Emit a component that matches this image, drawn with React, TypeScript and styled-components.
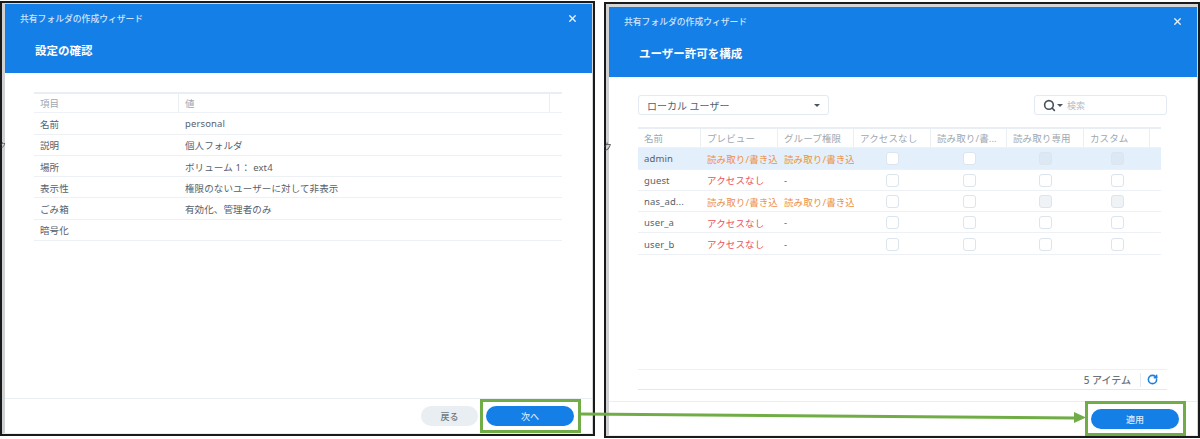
import React from "react";
import styled, { createGlobalStyle } from "styled-components";
import { X, Search, RotateCw } from "lucide-react";

const Global = createGlobalStyle`
  html, body { margin: 0; padding: 0; background: #fff; }
  body { font-family: "Noto Sans", "Noto Sans CJK JP", sans-serif; font-size: 9.5px; letter-spacing: 0.12px; color: #56616c; }
  #root { width: 1200px; height: 439px; overflow: hidden; }
`;

const Page = styled.div`
  position: relative;
  width: 1200px;
  height: 439px;
  display: flex;
  align-items: flex-start;
  gap: 9px;
  padding-top: 1px;
  box-sizing: border-box;
  filter: blur(0.35px);
`;

const Frame = styled.section<{ $w: number; $h: number; $top: number }>`
  width: ${(p) => p.$w}px;
  height: ${(p) => p.$h}px;
  margin-top: ${(p) => p.$top}px;
  flex: none;
  box-sizing: border-box;
  border: 2px solid #1a1a1a;
  background: #fff;
`;

const Dialog = styled.div<{ $inset: number }>`
  height: 100%;
  box-sizing: border-box;
  display: flex;
  flex-direction: column;
  border-left: 3px solid #cfd1d3;
  border-top: ${(p) => p.$inset}px solid #d4d6d8;
  border-right: 1px solid #d4d6d8;
  border-bottom: 1px solid #eceef0;
`;

const Header = styled.header<{ $h: number }>`
  height: ${(p) => p.$h}px;
  flex: none;
  background: #157fe8;
  box-sizing: border-box;
  padding: 7px 15px 0 15px;
  color: #fff;
`;

const HeaderTop = styled.div`
  display: flex;
  align-items: center;
  justify-content: space-between;
  height: 14px;
`;

const WizardName = styled.div`
  font-size: 8.8px;
  font-weight: 500;
  letter-spacing: 0;
  color: #cfe4fa;
  white-space: nowrap;
`;

const CloseIcon = styled(X)`
  width: 11px;
  height: 11px;
  color: #e4f0fc;
  margin-right: -1px;
`;

const Title = styled.h2`
  margin: 18px 0 0 15px;
  font-size: 11.5px;
  line-height: 16px;
  font-weight: 700;
  letter-spacing: 0;
  color: #fff;
  white-space: nowrap;
`;

const Body = styled.div<{ $top: number; $bottom: number }>`
  flex: 1;
  min-height: 0;
  display: flex;
  flex-direction: column;
  padding: ${(p) => p.$top}px 30px ${(p) => p.$bottom}px 29px;
`;

const Footer = styled.footer<{ $h: number }>`
  height: ${(p) => p.$h}px;
  flex: none;
  box-sizing: border-box;
  border-top: 1px solid #e9eef3;
  padding: 7px 18px 0 0;
  display: flex;
  justify-content: flex-end;
  gap: 8px;
`;

const Button = styled.button<{ $primary?: boolean; $w: number }>`
  width: ${(p) => p.$w}px;
  height: 20px;
  border: none;
  border-radius: 10px;
  padding: 0;
  font-family: inherit;
  font-size: 9px;
  font-weight: 500;
  background: ${(p) => (p.$primary ? "#157fe8" : "#e9eef3")};
  color: ${(p) => (p.$primary ? "#d8e9fb" : "#6d7882")};
`;

const PermTable = styled.div`
  width: 523px;
`;

const Row = styled.div<{ $cols: string; $selected?: boolean; $head?: boolean }>`
  display: grid;
  grid-template-columns: ${(p) => p.$cols};
  height: 21.3px;
  box-sizing: border-box;
  align-items: stretch;
  padding-top: ${(p) => (p.$head ? 0 : 1)}px;
  border-bottom: 1px solid ${(p) => (p.$head ? "#eef2f6" : "#edf1f5")};
  border-top: ${(p) => (p.$head ? "2px solid #e8eef4" : "none")};
  background: ${(p) => (p.$selected ? "#e3effa" : "transparent")};
  color: ${(p) => (p.$head ? "#a0a8b0" : "#56616c")};
`;

const Cell = styled.div<{ $divider?: boolean; $center?: boolean; $tone?: "orange" | "red" }>`
  display: flex;
  align-items: center;
  justify-content: ${(p) => (p.$center ? "center" : "flex-start")};
  padding: ${(p) => (p.$center ? "0" : "0 0 0 6px")};
  white-space: nowrap;
  overflow: hidden;
  border-right: ${(p) => (p.$divider ? "1px solid #eaeff4" : "none")};
  color: ${(p) => (p.$tone === "orange" ? "#ee8f45" : p.$tone === "red" ? "#ee4f5a" : "inherit")};
`;

const Check = styled.span<{ $fill?: string }>`
  width: 13px;
  height: 13px;
  box-sizing: border-box;
  border-radius: 3px;
  border: 1px solid #dce5ee;
  background: ${(p) => p.$fill ?? "#fff"};
`;

const Toolbar = styled.div`
  display: flex;
  justify-content: space-between;
  height: 20px;
  margin-bottom: 12px;
`;

const Field = styled.div<{ $w: number }>`
  width: ${(p) => p.$w}px;
  box-sizing: border-box;
  border: 1px solid #e3eaf1;
  border-radius: 3px;
  display: flex;
  align-items: center;
  padding: 0 8px;
  white-space: nowrap;
`;

const SelectValue = styled.span`
  font-size: 10px;
  letter-spacing: 0;
`;

const Caret = styled.span`
  width: 0;
  height: 0;
  border-left: 3px solid transparent;
  border-right: 3px solid transparent;
  border-top: 3px solid #4a5560;
`;

const SelectCaret = styled(Caret)`
  margin-left: auto;
  border-left-width: 3.5px;
  border-right-width: 3.5px;
`;

const SearchIcon = styled(Search)`
  width: 13px;
  height: 13px;
  color: #46525e;
  stroke-width: 3;
  margin-right: 1px;
`;

const Placeholder = styled.span`
  margin-left: 4px;
  color: #b4bbc2;
  font-size: 9px;
`;

const StatusBar = styled.div`
  margin-top: auto;
  height: 21px;
  box-sizing: border-box;
  border-top: 1px solid #edf1f5;
  border-bottom: 1px solid #e3e9ef;
  display: flex;
  align-items: center;
  justify-content: flex-end;
  padding-right: 9px;
  font-size: 10px;
  font-weight: 500;
  letter-spacing: 0;
  color: #6a747e;
`;

const StatusDivider = styled.span`
  width: 1px;
  height: 14px;
  background: #e3e9ef;
  margin: 0 6px 0 9px;
`;

const RefreshIcon = styled(RotateCw)`
  width: 11px;
  height: 11px;
  color: #1a7fe0;
  stroke-width: 3.4;
`;

const Highlight = styled.div<{ $x: number; $y: number; $w: number; $h: number }>`
  position: absolute;
  left: ${(p) => p.$x}px;
  top: ${(p) => p.$y}px;
  width: ${(p) => p.$w}px;
  height: ${(p) => p.$h}px;
  box-sizing: border-box;
  border: 3px solid #70ad47;
`;

const Connector = styled.svg`
  position: absolute;
  left: 0;
  top: 0;
  width: 1200px;
  height: 439px;
  pointer-events: none;
`;

const Stray = styled.span<{ $x: number; $y: number; $size: number }>`
  position: absolute;
  left: ${(p) => p.$x}px;
  top: ${(p) => p.$y}px;
  font-size: ${(p) => p.$size}px;
  line-height: 10px;
  color: #444;
`;

const summaryCols = "145px 371px 12px";
const summary: [string, string][] = [
  ["名前", "personal"],
  ["説明", "個人フォルダ"],
  ["場所", "ボリューム 1： ext4"],
  ["表示性", "権限のないユーザーに対して非表示"],
  ["ごみ箱", "有効化、管理者のみ"],
  ["暗号化", ""],
];

const permCols = "63px 77px 76px 77px 76px 77px 66px 11px";
const permHead = ["名前", "プレビュー", "グループ権限", "アクセスなし", "読み取り/書...", "読み取り専用", "カスタム"];

type User = { name: string; preview: string; tone: "orange" | "red"; group: string; tone2?: "orange"; sel?: boolean; fill?: string };
const users: User[] = [
  { name: "admin", preview: "読み取り/書き込", tone: "orange", group: "読み取り/書き込", tone2: "orange", sel: true, fill: "#dce8f4" },
  { name: "guest", preview: "アクセスなし", tone: "red", group: "-" },
  { name: "nas_ad...", preview: "読み取り/書き込", tone: "orange", group: "読み取り/書き込", tone2: "orange", fill: "#f0f3f6" },
  { name: "user_a", preview: "アクセスなし", tone: "red", group: "-" },
  { name: "user_b", preview: "アクセスなし", tone: "red", group: "-" },
];

export default function App() {
  return (
    <Page>
      <Global />
      <Frame $w={595} $h={435} $top={0}>
        <Dialog $inset={1}>
          <Header $h={69}>
            <HeaderTop>
              <WizardName>共有フォルダの作成ウィザード</WizardName>
              <CloseIcon strokeWidth={3} />
            </HeaderTop>
            <Title>設定の確認</Title>
          </Header>
          <Body $top={19} $bottom={0}>
            <Row $cols={summaryCols} $head>
              <Cell $divider>項目</Cell>
              <Cell $divider>値</Cell>
              <Cell />
            </Row>
            {summary.map(([k, v]) => (
              <Row $cols={summaryCols} key={k}>
                <Cell>{k}</Cell>
                <Cell>{v}</Cell>
                <Cell />
              </Row>
            ))}
          </Body>
          <Footer $h={35}>
            <Button $w={57}>戻る</Button>
            <Button $w={88} $primary>次へ</Button>
          </Footer>
        </Dialog>
      </Frame>

      <Frame $w={596} $h={436} $top={1}>
        <Dialog $inset={3}>
          <Header $h={70}>
            <HeaderTop>
              <WizardName>共有フォルダの作成ウィザード</WizardName>
              <CloseIcon strokeWidth={3} />
            </HeaderTop>
            <Title>ユーザー許可を構成</Title>
          </Header>
          <Body $top={18} $bottom={11}>
            <Toolbar>
              <Field $w={191}>
                <SelectValue>ローカル ユーザー</SelectValue>
                <SelectCaret />
              </Field>
              <Field $w={133}>
                <SearchIcon />
                <Caret />
                <Placeholder>検索</Placeholder>
              </Field>
            </Toolbar>
            <PermTable>
              <Row $cols={permCols} $head>
                {permHead.map((h) => (
                  <Cell $divider key={h}>{h}</Cell>
                ))}
                <Cell />
              </Row>
              {users.map((u) => (
                <Row $cols={permCols} $selected={u.sel} key={u.name}>
                  <Cell>{u.name}</Cell>
                  <Cell $tone={u.tone}>{u.preview}</Cell>
                  <Cell $tone={u.tone2}>{u.group}</Cell>
                  <Cell $center><Check /></Cell>
                  <Cell $center><Check /></Cell>
                  <Cell $center><Check $fill={u.fill} /></Cell>
                  <Cell $center><Check $fill={u.fill} /></Cell>
                  <Cell />
                </Row>
              ))}
            </PermTable>
            <StatusBar>
              5 アイテム
              <StatusDivider />
              <RefreshIcon />
            </StatusBar>
          </Body>
          <Footer $h={34}>
            <Button $w={88} $primary>適用</Button>
          </Footer>
        </Dialog>
      </Frame>

      <Stray $x={0} $y={140} $size={6}>ク</Stray>
      <Stray $x={603} $y={142} $size={9}>ク</Stray>
      <Highlight $x={480} $y={399} $w={101} $h={34} />
      <Highlight $x={1085} $y={401} $w={101} $h={35} />
      <Connector viewBox="0 0 1200 439">
        <path d="M581 414 L1075 418" stroke="#70ad47" strokeWidth="3" fill="none" />
        <path d="M1074 412 L1086 417.5 L1074 423 Z" fill="#70ad47" />
      </Connector>
    </Page>
  );
}
